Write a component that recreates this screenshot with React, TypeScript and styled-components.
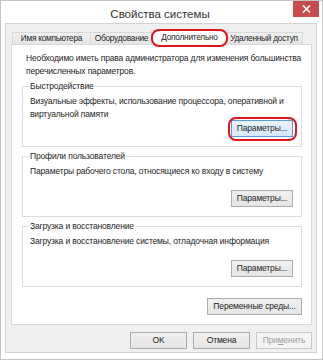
import styled, { createGlobalStyle } from "styled-components";

const Global = createGlobalStyle`
  html, body {
    margin: 0;
    padding: 0;
    background: #ffffff;
  }
  body {
    font-family: "Liberation Sans", Arial, sans-serif;
    color: #1e1e1e;
  }
`;

const Window = styled.div`
  width: 323px;
  height: 360px;
  box-sizing: border-box;
  border: 1px solid #c4c4c4;
  background: #ffffff;
  display: flex;
  flex-direction: column;
`;

const TitleBar = styled.div`
  height: 22px;
  display: grid;
  grid-template-columns: 1fr auto 1fr;
  align-items: start;
  padding-right: 3px;

  .title {
    grid-column: 2;
    font-size: 11.5px;
    line-height: 22px;
    padding-top: 2px;
    color: #333333;
  }
`;

const CloseButton = styled.div`
  grid-column: 3;
  justify-self: end;
  width: 26px;
  height: 16px;
  background: #c94b4b;
  display: flex;
  align-items: center;
  justify-content: center;
`;

const Frame = styled.div`
  flex: 1;
  display: flex;
  padding: 0 5px 6px 4px;
`;

const Client = styled.div`
  flex: 1;
  display: flex;
  flex-direction: column;
  background: #f0f0f0;
  border: 1px solid #d2d2d2;
  padding: 6px 4px 3px 5px;
`;

const TabRow = styled.div`
  display: flex;
  align-items: flex-end;
  padding-left: 1px;
  height: 15px;
  margin-bottom: -1px;
  position: relative;
  z-index: 1;
`;

const Tab = styled.div<{ $w: number; $active?: boolean }>`
  position: relative;
  flex-shrink: 0;
  box-sizing: border-box;
  width: ${(p) => p.$w}px;
  height: ${(p) => (p.$active ? 15 : 13)}px;
  margin-left: ${(p) => (p.$active ? -2 : -1)}px;
  margin-right: ${(p) => (p.$active ? -2 : 0)}px;
  border: 1px solid #d9d9d9;
  border-bottom: ${(p) => (p.$active ? "none" : "1px solid #d9d9d9")};
  background: ${(p) =>
    p.$active ? "#ffffff" : "linear-gradient(#f0f0f0, #e5e5e5)"};
  z-index: ${(p) => (p.$active ? 2 : 1)};
  font-size: 8.3px;
  line-height: ${(p) => (p.$active ? 13 : 11)}px;
  text-align: center;
  white-space: nowrap;
  letter-spacing: -0.25px;

  &:first-child {
    margin-left: 0;
  }
`;

const Mark = styled.span<{ $t: number; $r: number; $b: number; $l: number }>`
  position: absolute;
  top: ${(p) => p.$t}px;
  right: ${(p) => p.$r}px;
  bottom: ${(p) => p.$b}px;
  left: ${(p) => p.$l}px;
  border: 2px solid #e3131b;
  border-radius: 8px;
  pointer-events: none;
  z-index: 3;
`;

const Panel = styled.div`
  flex: 1;
  background: #ffffff;
  border: 1px solid #d9d9d9;
  padding: 7px 9px 0 10px;
  display: flex;
  flex-direction: column;
`;

const Text = styled.div`
  font-size: 8.5px;
  line-height: 13px;
  letter-spacing: -0.15px;
  white-space: nowrap;
`;

const Intro = styled(Text)`
  padding-left: 4px;
`;

const Group = styled.fieldset`
  margin: 3px 0 0 0;
  padding: 2px 8px 9px 7px;
  border: 1px solid #dcdcdc;
  min-width: 0;

  &:first-of-type {
    margin-top: 2px;
  }

  legend {
    font-size: 8.5px;
    line-height: 13px;
    letter-spacing: -0.15px;
    padding: 0 1px;
    margin-left: -1px;
  }
`;

const Desc = styled(Text)`
  line-height: 12.5px;
  min-height: 25px;
`;

const Right = styled.div`
  display: flex;
  justify-content: flex-end;
`;

const Button = styled.div<{ $w: number; $focus?: boolean; $disabled?: boolean }>`
  position: relative;
  box-sizing: border-box;
  width: ${(p) => p.$w}px;
  height: 17px;
  border: 1px solid
    ${(p) => (p.$focus ? "#5b9bd5" : p.$disabled ? "#c8c8c8" : "#acacac")};
  background: ${(p) =>
    p.$focus
      ? "linear-gradient(#e8f2fc, #d6e8fa)"
      : p.$disabled
      ? "#f4f4f4"
      : "linear-gradient(#f0f0f0, #e5e5e5)"};
  color: ${(p) => (p.$disabled ? "#9e9e9e" : "#1e1e1e")};
  font-size: 8.5px;
  line-height: 15px;
  letter-spacing: -0.15px;
  text-align: center;
  white-space: nowrap;
`;

const EnvRow = styled(Right)`
  margin-top: 11px;
`;

const Footer = styled.div`
  display: flex;
  justify-content: flex-end;
  gap: 6px;
  margin-top: 7px;
`;

function CloseIcon() {
  return (
    <svg width="9" height="8" viewBox="0 0 9 8">
      <path d="M1 0.5 L8 7.5 M8 0.5 L1 7.5" stroke="#ffffff" strokeWidth="1.6" />
    </svg>
  );
}

export default function App() {
  return (
    <>
      <Global />
      <Window>
        <TitleBar>
          <span className="title">Свойства системы</span>
          <CloseButton>
            <CloseIcon />
          </CloseButton>
        </TitleBar>
        <Frame>
          <Client>
            <TabRow>
              <Tab $w={79}>Имя компьютера</Tab>
              <Tab $w={63}>Оборудование</Tab>
              <Tab $w={77} $active>
                Дополнительно
                <Mark $t={-2} $r={-1} $b={-2} $l={-1} />
              </Tab>
              <Tab $w={78}>Удаленный доступ</Tab>
            </TabRow>
            <Panel>
              <Intro>
                Необходимо иметь права администратора для изменения большинства
                <br />
                перечисленных параметров.
              </Intro>

              <Group>
                <legend>Быстродействие</legend>
                <Desc>
                  Визуальные эффекты, использование процессора, оперативной и
                  <br />
                  виртуальной памяти
                </Desc>
                <Right>
                  <Button $w={62} $focus>
                    Параметры...
                    <Mark $t={-4} $r={-5} $b={-5} $l={-4} />
                  </Button>
                </Right>
              </Group>

              <Group>
                <legend>Профили пользователей</legend>
                <Desc>Параметры рабочего стола, относящиеся ко входу в систему</Desc>
                <Right>
                  <Button $w={62}>Параметры...</Button>
                </Right>
              </Group>

              <Group>
                <legend>Загрузка и восстановление</legend>
                <Desc>Загрузка и восстановление системы, отладочная информация</Desc>
                <Right>
                  <Button $w={62}>Параметры...</Button>
                </Right>
              </Group>

              <EnvRow>
                <Button $w={95}>Переменные среды...</Button>
              </EnvRow>
            </Panel>
            <Footer>
              <Button $w={57}>OK</Button>
              <Button $w={57}>Отмена</Button>
              <Button $w={56} $disabled>
                При<u>м</u>енить
              </Button>
            </Footer>
          </Client>
        </Frame>
      </Window>
    </>
  );
}
